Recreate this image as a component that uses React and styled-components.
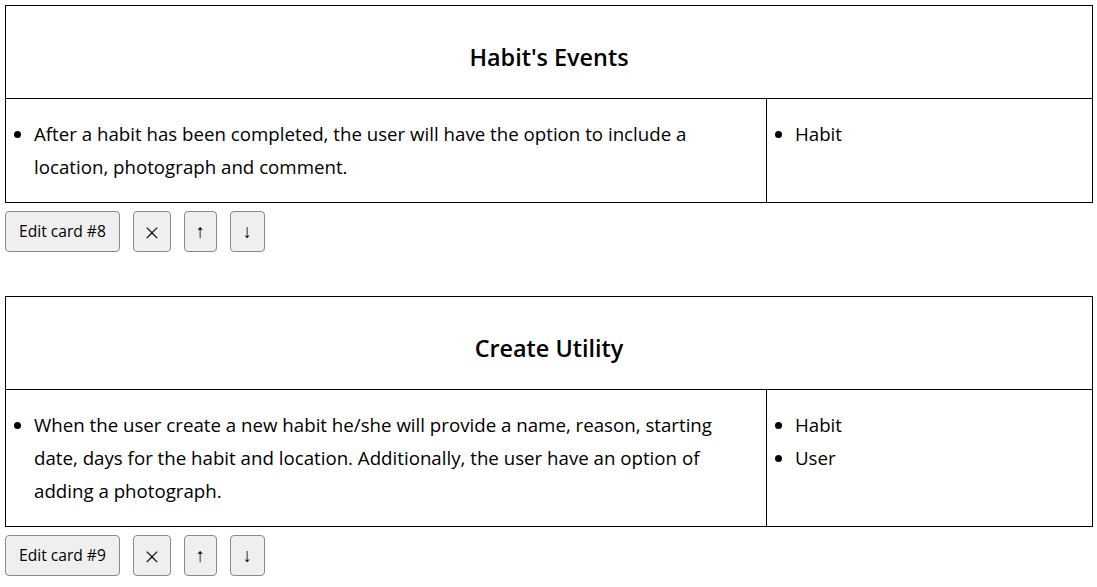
import React from "react";
import styled, { createGlobalStyle } from "styled-components";

const Global = createGlobalStyle`
  html, body { margin: 0; padding: 0; background: #fff; }
  body { padding: 5px 4px 5px 5px; font-family: "Open Sans", "Noto Sans", sans-serif; color: #000; }
`;

const Page = styled.div`
  display: flex;
  flex-direction: column;
  gap: 44px;
`;

const CardBlock = styled.section`
  display: flex;
  flex-direction: column;
  gap: 8px;
`;

const Card = styled.div`
  border: 1px solid #000;
  display: grid;
  grid-template-columns: 761px 1fr;
`;

const Title = styled.h2`
  grid-column: 1 / -1;
  margin: 0;
  height: 93px;
  display: flex;
  align-items: center;
  justify-content: center;
  padding-top: 9px;
  box-sizing: border-box;
  font-size: 23.4px;
  font-weight: 600;
  border-bottom: 1px solid #000;
`;

const Cell = styled.div`
  border-right: ${(p) => (p.$divider ? "1px solid #000" : "none")};
`;

const List = styled.ul`
  margin: 18px 0 19px;
  padding-left: 28px;
  padding-right: 40px;
  font-size: 18.7px;
  line-height: 33px;
`;

const Actions = styled.div`
  display: flex;
  gap: 13px;
`;

const Button = styled.button`
  font-family: "Open Sans", "Noto Sans", sans-serif;
  font-size: ${(p) => p.$fs || "15.6px"};
  font-weight: ${(p) => (p.$icon ? 300 : 400)};
  color: #000;
  height: 41px;
  padding: 0 ${(p) => (p.$icon ? "0" : "13px")};
  background: #efefef;
  border: 1px solid #8a8a8a;
  border-radius: 4px;
  width: ${(p) => p.$w || "auto"};
  line-height: 1;
`;

const cards = [
  {
    id: 8,
    title: "Habit's Events",
    items: [
      "After a habit has been completed, the user will have the option to include a location, photograph and comment.",
    ],
    refs: ["Habit"],
  },
  {
    id: 9,
    title: "Create Utility",
    items: [
      "When the user create a new habit he/she will provide a name, reason, starting date, days for the habit and location. Additionally, the user have an option of adding a photograph.",
    ],
    refs: ["Habit", "User"],
  },
];

export default function App() {
  return (
    <>
      <Global />
      <Page>
        {cards.map((c) => (
          <CardBlock key={c.id}>
            <Card>
              <Title>{c.title}</Title>
              <Cell $divider>
                <List>
                  {c.items.map((t) => (
                    <li key={t}>{t}</li>
                  ))}
                </List>
              </Cell>
              <Cell>
                <List>
                  {c.refs.map((t) => (
                    <li key={t}>{t}</li>
                  ))}
                </List>
              </Cell>
            </Card>
            <Actions>
              <Button>Edit card #{c.id}</Button>
              <Button $icon $w="38px" $fs="26px">×</Button>
              <Button $icon $w="33px" $fs="19px">↑</Button>
              <Button $icon $w="35px" $fs="19px">↓</Button>
            </Actions>
          </CardBlock>
        ))}
      </Page>
    </>
  );
}
